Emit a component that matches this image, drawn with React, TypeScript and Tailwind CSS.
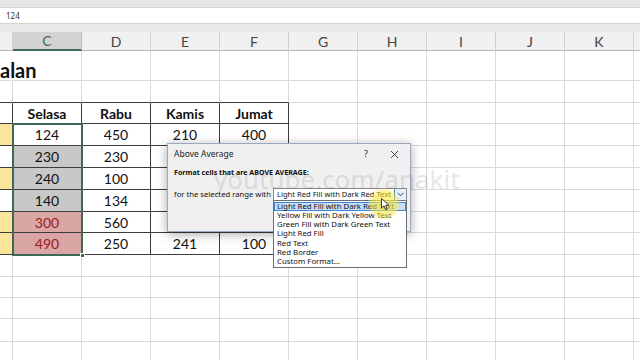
import React from 'react'

const COLS = ['B', 'C', 'D', 'E', 'F', 'G', 'H', 'I', 'J', 'K', '']
const COL_W = [13, 69, 69, 69, 69, 69, 69, 69, 69, 69, 12]
const ROW_H = [30, 22, 21, 22, 22, 22, 22, 21, 22, 22, 21, 21, 23, 22]

const cellFont = { fontFamily: 'Lato, "Open Sans", sans-serif' }
const uiFont = { fontFamily: '"Noto Sans", "Open Sans", sans-serif' }

interface Cell {
  text?: string
  bold?: boolean
  bg?: string
  color?: string
}

const headers = ['', 'Selasa', 'Rabu', 'Kamis', 'Jumat']
const values = [
  ['124', '450', '210', '400'],
  ['230', '230', '320', '120'],
  ['240', '100', '180', '350'],
  ['140', '134', '150', '210'],
  ['300', '560', '275', '90'],
  ['490', '250', '241', '100'],
]
const yellowRows = [0, 2, 4, 5]

function cellAt(r: number, c: number): Cell {
  if (r === 2 && c <= 4) return { text: headers[c], bold: true }
  if (r >= 3 && r <= 8 && c <= 4) {
    const i = r - 3
    if (c === 0) return { bg: yellowRows.includes(i) ? 'bg-[#fbe49c]' : '' }
    if (c === 1) {
      if (i === 0) return { text: values[i][0] }
      if (i >= 4) return { text: values[i][0], bg: 'bg-[#d9a5a5]', color: 'text-[#9c1c1c]' }
      return { text: values[i][0], bg: 'bg-[#c8c8c8]' }
    }
    return { text: values[i][c - 1] }
  }
  return {}
}

function inTable(r: number, c: number) {
  return r >= 2 && r <= 8 && c <= 4
}

function SheetRow({ r }: { r: number }) {
  return (
    <div className="flex" style={{ height: ROW_H[r] }}>
      {COLS.map((_, c) => {
        const cell = cellAt(r, c)
        const darkRight = inTable(r, c)
        const darkBottom = inTable(r, c) || (r === 1 && c <= 4)
        const noRight = r === 0 && c === 0
        return (
          <div
            key={c}
            style={{ width: COL_W[c] }}
            className={`relative flex shrink-0 items-center justify-center border-b border-r text-[14px] ${
              darkBottom ? 'border-b-[#3c3c3c]' : 'border-b-[#dadada]'
            } ${noRight ? 'border-r-transparent' : darkRight ? 'border-r-[#3c3c3c]' : 'border-r-[#dadada]'} ${
              cell.bg ?? ''
            } ${cell.color ?? 'text-[#111]'} ${cell.bold ? 'font-bold' : ''}`}
          >
            {cell.text}
          </div>
        )
      })}
    </div>
  )
}

function Dialog() {
  const items = [
    'Light Red Fill with Dark Red Text',
    'Yellow Fill with Dark Yellow Text',
    'Green Fill with Dark Green Text',
    'Light Red Fill',
    'Red Text',
    'Red Border',
    'Custom Format...',
  ]
  return (
    <>
      <div
        className="absolute left-[167px] top-[143px] flex h-[89px] w-[244px] flex-col border border-[#9aa9bb] bg-[#f0f0f0] pl-[6px] shadow-[0_2px_10px_rgba(0,0,0,0.35)]"
        style={uiFont}
      >
        <div className="flex h-[20px] items-center text-[8.5px] text-[#222]">
          <span className="flex-1">Above Average</span>
          <span className="mr-[22px] text-[9px]">?</span>
          <svg width="9" height="9" viewBox="0 0 9 9" className="mr-[11px]">
            <path d="M1 1 L8 8 M8 1 L1 8" stroke="#333" strokeWidth="0.9" />
          </svg>
        </div>
        <div className="mt-[3px] text-[7.1px] font-bold text-[#111]">Format cells that are ABOVE AVERAGE:</div>
        <div className="mt-[11px] text-[7.7px] text-[#111]">for the selected range with</div>
      </div>

      <div
        className="absolute left-[273px] top-[188px] flex h-[13px] w-[134px] items-center border border-[#8a8a8a] bg-white pl-[3px] text-[7.6px] text-[#111]"
        style={uiFont}
      >
        <span className="flex-1 whitespace-nowrap">Light Red Fill with Dark Red Text</span>
        <div className="flex h-full w-[12px] items-center justify-center border-l border-[#3c7fb1] bg-[#e5f1fb]">
          <svg width="7" height="5" viewBox="0 0 7 5">
            <path d="M0.5 0.8 L3.5 3.8 L6.5 0.8" fill="none" stroke="#333" strokeWidth="0.9" />
          </svg>
        </div>
      </div>

      <div
        className="absolute left-[273px] top-[200px] w-[134px] border border-[#6e6e6e] bg-white py-[0.5px] text-[7.8px] leading-[7.3px] text-[#111]"
        style={uiFont}
      >
        {items.map((it, i) => (
          <div
            key={it}
            className={`whitespace-nowrap border pl-[2px] ${
              i === 0 ? 'border-[#3d86d6] bg-[#c7def4]' : 'border-transparent'
            }`}
          >
            {it}
          </div>
        ))}
      </div>
    </>
  )
}

export default function App() {
  return (
    <div className="relative h-[360px] w-[640px] overflow-hidden bg-white" style={cellFont}>
      <div className="h-[7px] bg-[#e6e6e6]" />
      <div className="flex h-[17px] items-center border-y border-[#d4d4d4] bg-white pl-[6px] text-[8px] text-[#333]" style={uiFont}>
        124
      </div>
      <div className="h-[8px] bg-[#e9e9e9]" />

      <div className="flex h-[19px] bg-[#f0f0f0]">
        {COLS.map((col, c) => (
          <div
            key={c}
            style={{ width: COL_W[c] }}
            className={`flex shrink-0 items-center justify-center border-r text-[14px] ${
              c === 1
                ? 'border-b-2 border-r-[#bdbdbd] border-b-[#3f6e58] bg-[#d3d3d3] text-[#3f6657]'
                : 'border-b border-r-[#cfcfcf] border-b-[#b5b5b5] text-[#444]'
            }`}
          >
            {c === 0 ? '' : col}
          </div>
        ))}
      </div>

      <div className="relative">
        {ROW_H.map((_, r) => (
          <SheetRow key={r} r={r} />
        ))}
        <div className="absolute left-0 top-[4px] whitespace-nowrap text-[20px] font-bold text-[#111]">alan</div>

        <div className="pointer-events-none absolute left-[12px] top-[72px] h-[133px] w-[71px] border-2 border-[#3d6a55]" />
        <div className="absolute left-[80px] top-[202px] h-[5px] w-[5px] border border-white bg-[#3d6a55]" />
      </div>

      <Dialog />

      <div
        className="pointer-events-none absolute left-[214px] top-[160px] whitespace-nowrap text-[26px] text-[#000] opacity-[0.09]"
        style={uiFont}
      >
        youtube.com/anakit
      </div>

      <div className="pointer-events-none absolute left-[368px] top-[188px] h-[32px] w-[32px] rounded-full bg-[radial-gradient(circle,rgba(250,232,70,0.75)_0%,rgba(250,232,70,0.55)_55%,rgba(250,232,70,0)_75%)]" />
      <svg className="absolute left-[381px] top-[198px]" width="9" height="13" viewBox="0 0 9 13">
        <path d="M0.5 0.5 L0.5 10 L3 7.8 L4.8 11.8 L6.3 11.1 L4.6 7.3 L8 7.3 Z" fill="#fff" stroke="#111" strokeWidth="0.8" />
      </svg>
    </div>
  )
}
